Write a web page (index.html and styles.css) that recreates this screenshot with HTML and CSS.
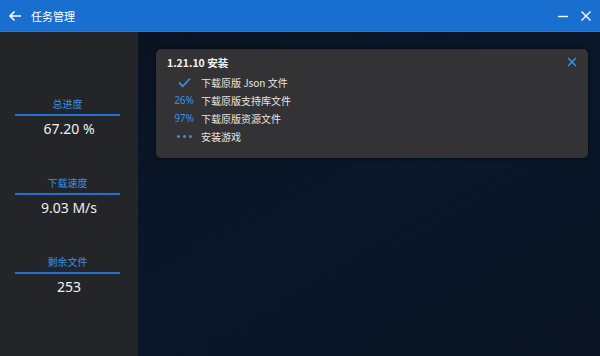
FILE: index.html
```html
<!DOCTYPE html>
<html lang="zh-CN">
<head>
  <meta charset="UTF-8" />
  <title>任务管理</title>
  <link rel="stylesheet" href="styles.css">
</head>
<body>
  <div class="titlebar">
    <svg class="back" width="14" height="12" viewBox="0 0 14 12">
      <path d="M13 6H2M6.5 1.5L2 6l4.5 4.5" fill="none" stroke="#fff" stroke-width="1.6"/>
    </svg>
    <span class="title">任务管理</span>
    <div class="win-btns">
      <svg width="12" height="12" viewBox="0 0 12 12"><path d="M1 6.5h10" stroke="#fff" stroke-width="1.4"/></svg>
      <svg width="12" height="12" viewBox="0 0 12 12"><path d="M1.5 1.5l9 9M10.5 1.5l-9 9" stroke="#fff" stroke-width="1.4"/></svg>
    </div>
  </div>

  <div class="content">
    <div class="sidebar">
      <div class="stat">
        <div class="label">总进度</div>
        <div class="value">67.20 %</div>
      </div>
      <div class="stat">
        <div class="label">下载速度</div>
        <div class="value">9.03 M/s</div>
      </div>
      <div class="stat">
        <div class="label">剩余文件</div>
        <div class="value">253</div>
      </div>
    </div>

    <div class="main">
      <div class="card">
        <div class="card-head">
          <span class="card-title">1.21.10 安装</span>
          <svg width="10" height="10" viewBox="0 0 10 10"><path d="M1 1l8 8M9 1L1 9" stroke="#3b8fe6" stroke-width="1.5"/></svg>
        </div>
        <div class="task">
          <span class="state">
            <svg width="13" height="11" viewBox="0 0 13 11"><path d="M1 5.5l3.8 3.8L12 1.5" fill="none" stroke="#3b8fe6" stroke-width="1.8"/></svg>
          </span>
          <span>下载原版 Json 文件</span>
        </div>
        <div class="task">
          <span class="state pct">26%</span>
          <span>下载原版支持库文件</span>
        </div>
        <div class="task">
          <span class="state pct">97%</span>
          <span>下载原版资源文件</span>
        </div>
        <div class="task">
          <span class="state dots"><i></i><i></i><i></i></span>
          <span>安装游戏</span>
        </div>
      </div>
    </div>
  </div>
</body>
</html>
```
FILE: styles.css
```css
* {
  box-sizing: border-box;
  margin: 0;
  padding: 0;
}

body {
  width: 600px;
  height: 356px;
  overflow: hidden;
  font-family: "Noto Sans CJK SC", "Noto Sans", sans-serif;
  background: #0a1321;
  color: #e8e8e8;
  display: flex;
  flex-direction: column;
}

.titlebar {
  height: 32px;
  background: #186fd0;
  border-bottom: 1px solid #2a7ad4;
  display: flex;
  align-items: center;
  padding: 0 8px 0 8px;
  color: #fff;
}

.back {
  margin-right: 9px;
}

.title {
  font-size: 11px;
}

.win-btns {
  margin-left: auto;
  display: flex;
  gap: 11px;
}

.content {
  flex: 1;
  display: flex;
}

.sidebar {
  width: 138px;
  background: #242529;
  display: flex;
  flex-direction: column;
  padding-top: 65px;
  gap: 37px;
}

.stat {
  text-align: center;
}

.stat .label {
  color: #3b8fe6;
  font-size: 10px;
  line-height: 14px;
  margin: 0 18px 0 15px;
  padding-bottom: 3px;
  border-bottom: 2px solid #1f74d2;
}

.stat .value {
  font-family: "Noto Sans", sans-serif;
  font-size: 14px;
  line-height: 20px;
  margin-top: 3px;
  color: #f0f0f0;
}

.main {
  flex: 1;
  background: linear-gradient(150deg, #0a1322 0%, #09172a 50%, #0a1422 100%);
  padding: 17px 12px 0 18px;
}

.card {
  background: #333335;
  border-radius: 5px;
  box-shadow: 0 0 4px rgba(0, 0, 0, 0.6);
  padding: 3px 11px 13px 11px;
  font-size: 10px;
}

.card-head {
  display: flex;
  justify-content: space-between;
  align-items: center;
  height: 20px;
  margin-bottom: 1px;
}

.card-title {
  font-weight: bold;
  font-size: 10.5px;
  color: #f2f2f2;
}

.task {
  display: flex;
  align-items: center;
  height: 18px;
  color: #e6e6e6;
}

.state {
  width: 34px;
  display: flex;
  justify-content: center;
  align-items: center;
}

.pct {
  color: #3b8fe6;
  font-family: "Noto Sans", sans-serif;
  font-size: 10px;
}

.dots {
  gap: 3px;
}

.dots i {
  width: 3px;
  height: 3px;
  border-radius: 50%;
  background: #3b8fe6;
}
```
